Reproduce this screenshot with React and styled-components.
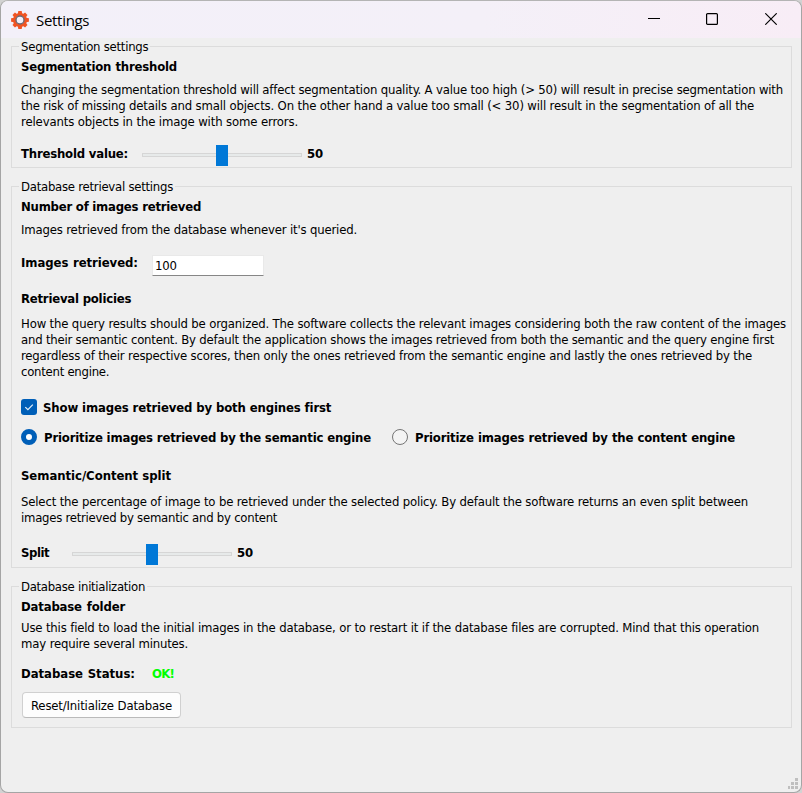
import React from 'react';
import styled, { createGlobalStyle } from 'styled-components';

const GlobalStyle = createGlobalStyle`
  *, *::before, *::after { box-sizing: border-box; }
  body { margin: 0; background: #d2d2d2; overflow: hidden; }
  #root { height: 100vh; }
  p, h1, h2 { margin: 0; font: inherit; }
`;

const Window = styled.main`
  display: flex;
  flex-direction: column;
  width: 802px;
  height: 793px;
  overflow: hidden;
  border: 1px solid #a5a5a5;
  border-top-color: #b4b4b4;
  border-radius: 8px;
  background: #efefef;
  color: #000;
  font: 13px/16px 'DejaVu Sans Condensed', 'DejaVu Sans', Tahoma, sans-serif;
`;

const TitleBar = styled.header`
  display: flex;
  align-items: center;
  flex: 0 0 37px;
  padding: 0 1px 0 10px;
  background: linear-gradient(90deg, #f3f0f9 0%, #f4f0f8 60%, #f8edf6 100%);
`;

const Title = styled.h1`
  flex: 1;
  padding-left: 7px;
  font: 15px/20px 'Open Sans', 'Noto Sans', sans-serif;
  letter-spacing: -0.3px;
`;

const CaptionButton = styled.button`
  display: flex;
  align-items: center;
  justify-content: center;
  width: 58.5px;
  height: 37px;
  padding: 0 0 1px;
  border: 0;
  background: none;
`;

const Content = styled.div`
  display: flex;
  flex: 1;
  flex-direction: column;
  gap: 18px;
  padding: 8px 9px 0 10px;
`;

const Group = styled.section`
  display: flex;
  flex-direction: column;
  align-items: flex-start;
  height: ${(p) => p.$height}px;
  padding: 0 4px 0 9px;
  border: 1px solid #dcdcdc;
`;

const Text = styled.p`
  flex: none;
  width: ${(p) => p.$width}px;
  height: 16px;
  letter-spacing: ${(p) => p.$tracking ?? -0.17}px;
  white-space: nowrap;
  text-align: justify;
  text-align-last: justify;
`;

const Legend = styled(Text)`
  margin: -8px 0 0 -2px;
  padding: 0 2px;
  box-sizing: content-box;
  background: #efefef;
`;

const Bold = styled(Text)`
  font-weight: bold;
`;

const Heading = styled(Bold).attrs({ as: 'h2' })`
  margin-top: ${(p) => p.$top ?? 4}px;
`;

const Paragraph = styled.div`
  margin-top: ${(p) => p.$top}px;
`;

const Row = styled.div`
  display: flex;
  align-items: flex-start;
  height: ${(p) => p.$height ?? 16}px;
  margin-top: ${(p) => p.$top}px;
`;

const SliderBox = styled.div`
  display: flex;
  justify-content: center;
  width: 160px;
  height: 21px;
  margin: -1px 5px 0 ${(p) => p.$left}px;
  background: linear-gradient(#d6d6d6, #d6d6d6) 0 8px / 100% 1px no-repeat,
    linear-gradient(#d6d6d6, #d6d6d6) 0 11px / 100% 1px no-repeat,
    linear-gradient(#d6d6d6, #d6d6d6) 0 8px / 1px 4px no-repeat,
    linear-gradient(#d6d6d6, #d6d6d6) 100% 8px / 1px 4px no-repeat,
    linear-gradient(#e7eaea, #e7eaea) 0 8px / 100% 4px no-repeat;
`;

const Thumb = styled.div`
  width: 12px;
  height: 21px;
  background: #0078d7;
`;

const NumberInput = styled.input`
  width: 112px;
  height: 21px;
  margin-left: 14px;
  padding: 0 3px 1px 2px;
  border: 1px solid #e9e9e9;
  border-bottom-color: #868686;
  border-radius: 1px;
  background: #fff;
  color: #000;
  font: inherit;
  letter-spacing: -0.2px;
`;

const CheckMark = styled.span`
  display: flex;
  width: 16px;
  height: 16px;
  margin: -1px 6px 0 0;
  border-radius: 3px;
  background: #005fb8;
`;

const Radio = styled.span`
  width: 16px;
  height: 16px;
  margin: -1px 7px 0 ${(p) => p.$left ?? 0}px;
  border: ${(p) => (p.$on ? '5px solid #005fb8' : '1px solid #757575')};
  border-radius: 50%;
  background: ${(p) => (p.$on ? '#fff' : '#f4f4f4')};
`;

const Status = styled(Bold)`
  margin-left: 17px;
  color: #00ff00;
`;

const PushButton = styled.button`
  display: flex;
  width: 159px;
  height: 26px;
  margin: 10px 0 0 1px;
  padding: 5px 8px;
  border: 1px solid #d0d0d0;
  border-bottom-color: #bababa;
  border-radius: 4px;
  background: #fdfdfd;
  color: #000;
  font: inherit;
`;

const GripRow = styled.footer`
  display: flex;
  justify-content: flex-end;
  height: 14px;
  padding-right: 2px;
`;

const GEAR_ANGLES = [0, 45, 90, 135, 180, 225, 270, 315];

function GearIcon() {
  return (
    <svg width="18" height="18" viewBox="-9 -9 18 18">
      <g fill="#f05423">
        {GEAR_ANGLES.map((a) => (
          <path key={a} d="M-2.3 -5.5 L-1.7 -8.9 H1.7 L2.3 -5.5Z" transform={`rotate(${a})`} />
        ))}
        <circle r="7" />
      </g>
      <circle r="4" fill="#f3f0f9" stroke="#6d6a75" strokeWidth="1.4" />
    </svg>
  );
}

function Slider({ left }) {
  return (
    <SliderBox $left={left}>
      <Thumb />
    </SliderBox>
  );
}

export default function App() {
  return (
    <>
      <GlobalStyle />
      <Window>
        <TitleBar>
          <GearIcon />
          <Title>Settings</Title>
          <CaptionButton aria-label="Minimize">
            <svg width="12" height="12"><path d="M0 5.5H12" stroke="#000" /></svg>
          </CaptionButton>
          <CaptionButton aria-label="Maximize">
            <svg width="12" height="12"><rect x=".6" y=".6" width="10.8" height="10.8" rx="1" fill="none" stroke="#000" strokeWidth="1.2" /></svg>
          </CaptionButton>
          <CaptionButton aria-label="Close">
            <svg width="12" height="12"><path d="M.3 .3L11.7 11.7M11.7 .3L.3 11.7" stroke="#000" strokeWidth="1.15" /></svg>
          </CaptionButton>
        </TitleBar>
        <Content>
          <Group $height={122}>
            <Legend $width={127} $tracking={-0.25}>Segmentation settings</Legend>
            <Heading $width={156} $tracking={-0.2}>Segmentation threshold</Heading>
            <Paragraph $top={7}>
              <Text $width={762} $tracking={-0.18}>Changing the segmentation threshold will affect segmentation quality. A value too high (&gt; 50) will result in precise segmentation with</Text>
              <Text $width={733} $tracking={-0.157}>the risk of missing details and small objects. On the other hand a value too small (&lt; 30) will result in the segmentation of all the</Text>
              <Text $width={277} $tracking={-0.135}>relevants objects in the image with some errors.</Text>
            </Paragraph>
            <Row $top={16}>
              <Bold $width={107} $tracking={-0.2}>Threshold value:</Bold>
              <Slider left={14} />
              <Bold $width={17}>50</Bold>
            </Row>
          </Group>

          <Group $height={382}>
            <Legend $width={152} $tracking={-0.25}>Database retrieval settings</Legend>
            <Heading $width={180} $tracking={-0.23}>Number of images retrieved</Heading>
            <Paragraph $top={7}>
              <Text $width={336}>Images retrieved from the database whenever it's queried.</Text>
            </Paragraph>
            <Row $top={17} $height={21}>
              <Bold $width={117} $tracking={-0.06}>Images retrieved:</Bold>
              <NumberInput defaultValue="100" />
            </Row>
            <Heading $top={15} $width={110} $tracking={-0.22}>Retrieval policies</Heading>
            <Paragraph $top={9}>
              <Text $width={765} $tracking={-0.16}>How the query results should be organized. The software collects the relevant images considering both the raw content of the images</Text>
              <Text $width={753} $tracking={-0.21}>and their semantic content. By default the application shows the images retrieved from both the semantic and the query engine first</Text>
              <Text $width={731} $tracking={-0.18}>regardless of their respective scores, then only the ones retrieved from the semantic engine and lastly the ones retrieved by the</Text>
              <Text $width={87} $tracking={-0.26}>content engine.</Text>
            </Paragraph>
            <Row $top={20}>
              <CheckMark>
                <svg width="16" height="16"><path d="M4.3 8.1L6.9 10.7L11.8 5.6" fill="none" stroke="#e5f0fa" strokeWidth="1.2" /></svg>
              </CheckMark>
              <Bold $width={288} $tracking={-0.13}>Show images retrieved by both engines first</Bold>
            </Row>
            <Row $top={14}>
              <Radio $on />
              <Bold $width={327} $tracking={-0.18}>Prioritize images retrieved by the semantic engine</Bold>
              <Radio $left={21} />
              <Bold $width={320} $tracking={-0.18}>Prioritize images retrieved by the content engine</Bold>
            </Row>
            <Heading $top={22} $width={150} $tracking={-0.05}>Semantic/Content split</Heading>
            <Paragraph $top={10}>
              <Text $width={727}>Select the percentage of image to be retrieved under the selected policy. By default the software returns an even split between</Text>
              <Text $width={256} $tracking={-0.25}>images retrieved by semantic and by content</Text>
            </Paragraph>
            <Row $top={19}>
              <Bold $width={28} $tracking={-0.45}>Split</Bold>
              <Slider left={23} />
              <Bold $width={17}>50</Bold>
            </Row>
          </Group>

          <Group $height={142}>
            <Legend $width={124} $tracking={-0.3}>Database initialization</Legend>
            <Heading $width={104}>Database folder</Heading>
            <Paragraph $top={5}>
              <Text $width={738}>Use this field to load the initial images in the database, or to restart it if the database files are corrupted. Mind that this operation</Text>
              <Text $width={167} $tracking={-0.2}>may require several minutes.</Text>
            </Paragraph>
            <Row $top={14}>
              <Bold $width={114} $tracking={-0.03}>Database Status:</Bold>
              <Status $width={22} $tracking={-0.8}>OK!</Status>
            </Row>
            <PushButton>
              <Text as="span" $width={141}>Reset/Initialize Database</Text>
            </PushButton>
          </Group>
        </Content>
        <GripRow>
          <svg width="11" height="12" fill="#bfbfbf">
            <path d="M7 0h3v3h-3zM3 4h3v3h-3zM7 4h3v3h-3zM0 8h2v3h-2zM3 8h3v3h-3zM7 8h3v3h-3z" />
          </svg>
        </GripRow>
      </Window>
    </>
  );
}
